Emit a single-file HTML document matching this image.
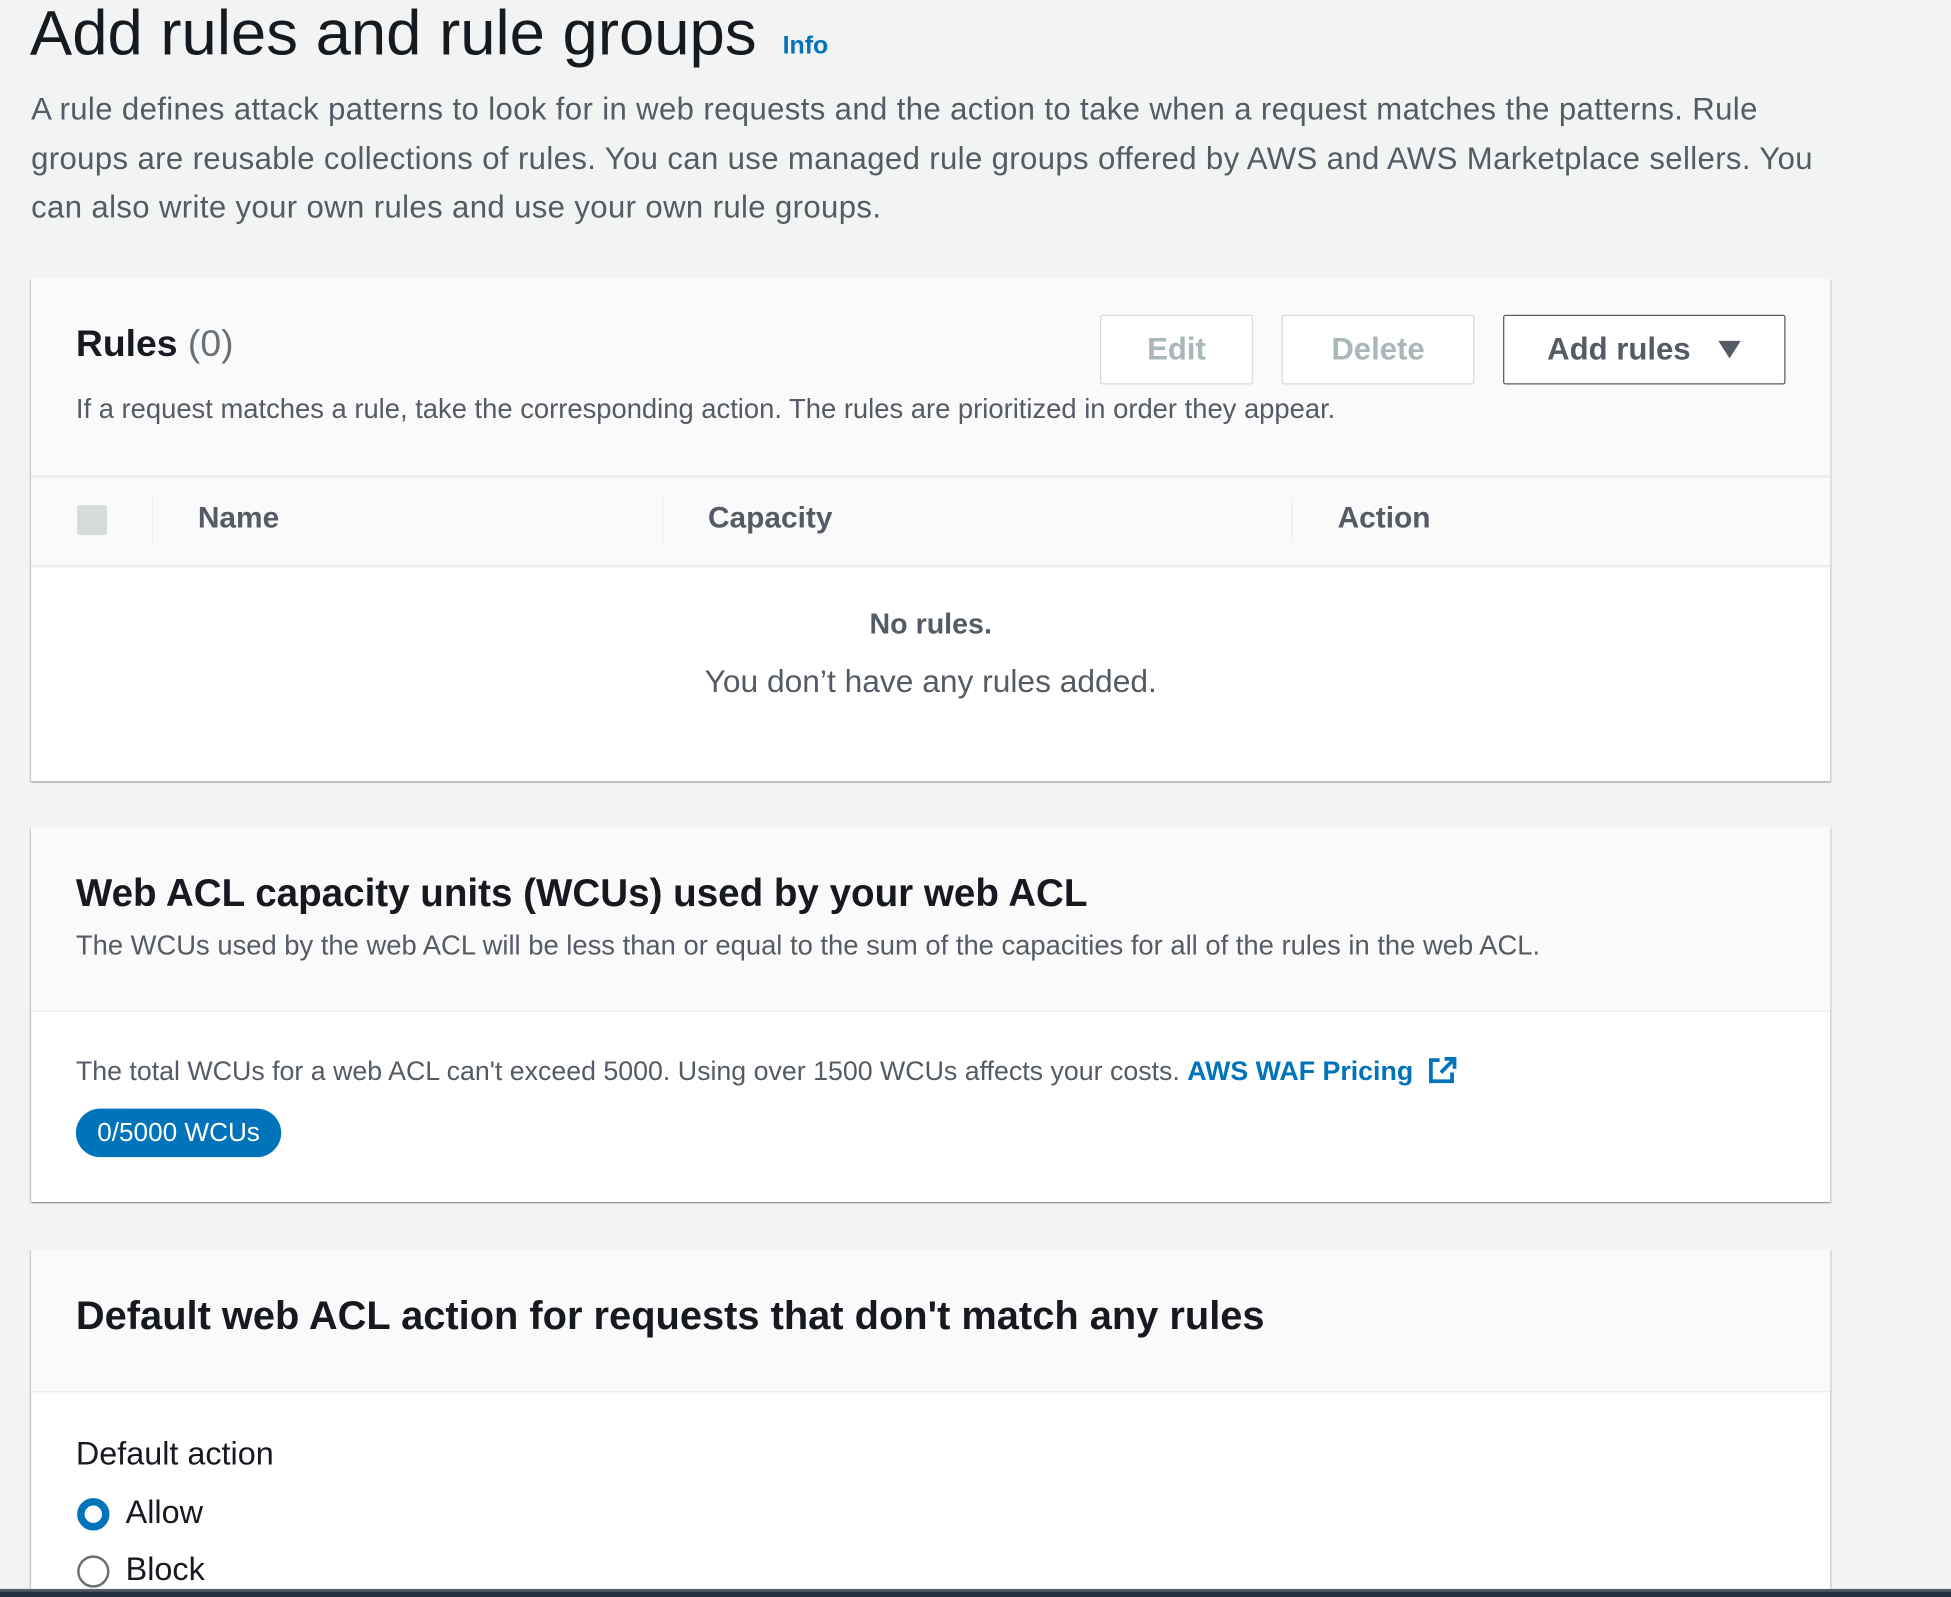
<!DOCTYPE html>
<html><head><meta charset="utf-8"><style>
html,body{margin:0;padding:0;background:#f2f3f3;overflow:hidden}
body{width:1951px;height:1597px;position:relative}
#w{position:absolute;left:0;top:0;width:1568px;height:1284px;transform:scale(1.24426);transform-origin:0 0;font-family:"Liberation Sans",sans-serif;color:#16191f}
.a{position:absolute;white-space:nowrap;line-height:1.2}
.p{position:absolute;left:25px;width:1446px;background:#fff;box-shadow:0 1px 1px rgba(0,28,36,.3),1px 1px 1px rgba(0,28,36,.15),-1px 1px 1px rgba(0,28,36,.15)}
.h{position:absolute;left:0;top:0;width:100%;background:#fafafa;border-bottom:1px solid #eaeded}
.btn{position:absolute;top:253px;height:56px;border:1px solid #d5dbdb;border-radius:2px;background:#fff;box-sizing:border-box;color:#aab7b8;font-weight:bold;font-size:25px;display:flex;align-items:center;justify-content:center}
.g{color:#545b64}
</style></head><body><div id="w">
<div class="a" style="left:24px;top:-4px;font-size:51px;">Add rules and rule groups</div>
<div class="a" style="left:629px;top:25px;font-size:20px;font-weight:bold;color:#0073bb">Info</div>
<div class="a g" style="left:25px;top:69px;font-size:25px;letter-spacing:0.3px;line-height:39.5px">A rule defines attack patterns to look for in web requests and the action to take when a request matches the patterns. Rule<br>groups are reusable collections of rules. You can use managed rule groups offered by AWS and AWS Marketplace sellers. You<br>can also write your own rules and use your own rule groups.</div>

<div class="p" style="top:224px;height:404px">
 <div class="h" style="height:158px"></div>
 <div class="a" style="left:36px;top:35px;font-size:30px;font-weight:bold">Rules <span style="font-weight:normal;color:#687078">(0)</span></div>
 <div class="a g" style="left:36px;top:92px;font-size:22px">If a request matches a rule, take the corresponding action. The rules are prioritized in order they appear.</div>
 <div style="position:absolute;left:0;top:158px;width:100%;height:70px;background:#fafafa;border-top:2px solid #eaeded;border-bottom:2px solid #eaeded"></div>
 <div style="position:absolute;left:37px;top:182px;width:24px;height:24px;background:#d5dbdb;border-radius:2px"></div>
 <div style="position:absolute;left:97px;top:176px;width:1px;height:36px;background:#eaeded"></div>
 <div style="position:absolute;left:507px;top:176px;width:1px;height:36px;background:#eaeded"></div>
 <div style="position:absolute;left:1013px;top:176px;width:1px;height:36px;background:#eaeded"></div>
 <div class="a g" style="left:134px;top:179px;font-size:24px;font-weight:bold">Name</div>
 <div class="a g" style="left:544px;top:179px;font-size:24px;font-weight:bold">Capacity</div>
 <div class="a g" style="left:1050px;top:179px;font-size:24px;font-weight:bold">Action</div>
 <div class="a g" style="left:0;width:100%;text-align:center;top:264px;font-size:23px;font-weight:bold">No rules.</div>
 <div class="a g" style="left:0;width:100%;text-align:center;top:309px;font-size:25.5px">You don’t have any rules added.</div>
</div>
<div class="btn" style="left:884px;width:123px">Edit</div>
<div class="btn" style="left:1030px;width:155px">Delete</div>
<div class="btn" style="left:1208px;width:227px;border:1.5px solid #545b64;color:#545b64">Add rules&nbsp;&nbsp;&nbsp;<svg width="20" height="16" viewBox="0 0 20 16"><path d="M1 1h18L10 15z" fill="#545b64"/></svg></div>

<div class="p" style="top:665px;height:301px">
 <div class="h" style="height:147px"></div>
 <div class="a" style="left:36px;top:34px;font-size:31px;font-weight:bold">Web ACL capacity units (WCUs) used by your web ACL</div>
 <div class="a g" style="left:36px;top:82px;font-size:22px">The WCUs used by the web ACL will be less than or equal to the sum of the capacities for all of the rules in the web ACL.</div>
 <div class="a g" style="left:36px;top:184px;font-size:21.5px">The total WCUs for a web ACL can't exceed 5000. Using over 1500 WCUs affects your costs. <b style="color:#0073bb">AWS WAF Pricing</b> <svg width="24" height="22" viewBox="0 0 24 22" style="vertical-align:-3px;margin-left:6px"><path d="M9 3H2v17h17v-7M13 2h8v8M21 2L10 13" fill="none" stroke="#0073bb" stroke-width="3"/></svg></div>
 <div class="a" style="left:36px;top:226px;width:165px;height:39px;border-radius:20px;background:#0073bb;color:#fff;font-size:21px;line-height:39px;text-align:center">0/5000 WCUs</div>
</div>

<div class="p" style="top:1004px;height:290px">
 <div class="h" style="height:114px"></div>
 <div class="a" style="left:36px;top:34px;font-size:32px;font-weight:bold">Default web ACL action for requests that don't match any rules</div>
 <div class="a" style="left:36px;top:149px;font-size:26px">Default action</div>
 <div style="position:absolute;left:37px;top:200px;width:14px;height:14px;border:6px solid #0073bb;border-radius:50%;background:#fff"></div>
 <div class="a" style="left:76px;top:196px;font-size:26px">Allow</div>
 <div style="position:absolute;left:37px;top:246px;width:22px;height:22px;border:2px solid #687078;border-radius:50%;background:#fff"></div>
 <div class="a" style="left:76px;top:242px;font-size:26px">Block</div>
</div>
<div style="position:absolute;left:0;top:1277px;width:1568px;height:2px;background:#545b64"></div>
<div style="position:absolute;left:0;top:1279px;width:1568px;height:6px;background:#232f3e"></div>
</div></body></html>
